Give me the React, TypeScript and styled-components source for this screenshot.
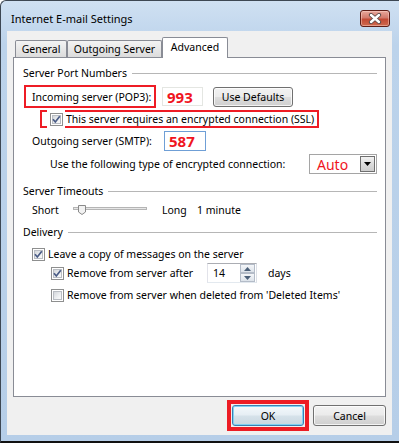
import React from "react";
import styled, { createGlobalStyle } from "styled-components";

const GlobalStyle = createGlobalStyle`
  html, body { margin: 0; padding: 0; background: #fff; }
  body {
    font-family: "Noto Sans", "Open Sans", sans-serif;
    font-size: 10.5px;
    color: #000;
  }
  * { box-sizing: border-box; }
`;

const RED = "#ee1c25";

const CheckMark = () => (
  <svg width="11" height="11" viewBox="0 0 11 11">
    <path d="M2 5.3 L4.3 8 L8.8 2.2" fill="none" stroke="#4a5c86" strokeWidth="1.7" />
  </svg>
);

const CheckBox: React.FC<{ checked?: boolean }> = ({ checked }) => (
  <Box>{checked && <CheckMark />}</Box>
);

const App: React.FC = () => {
  return (
    <>
      <GlobalStyle />
      <Window>
        <TitleBar>
          <Title>Internet E-mail Settings</Title>
          <CloseButton>
            <svg width="14" height="11" viewBox="0 0 14 11">
              <path d="M3 2 L11 9 M11 2 L3 9" stroke="#5b4a48" strokeWidth="4.2" strokeLinecap="round" />
              <path d="M3 2 L11 9 M11 2 L3 9" stroke="#fff" strokeWidth="2.4" strokeLinecap="round" />
            </svg>
          </CloseButton>
        </TitleBar>
        <Client>
          <TabStrip>
            <Tab $w={52}>General</Tab>
            <Tab $w={95}>Outgoing Server</Tab>
            <Tab $w={66} $active>Advanced</Tab>
          </TabStrip>
          <Panel>
            <GroupHeader $mt={7}>Server Port Numbers</GroupHeader>

            <Row $mt={4} $h={23} $indent={1}>
              <MarkBox>Incoming server (POP3):</MarkBox>
              <NumberField $w={41} $h={19} $ml={6}>993</NumberField>
              <Button $w={80} $h={20} $ml={10}>Use Defaults</Button>
            </Row>

            <Row $mt={2} $h={18} $indent={17}>
              <SslMark>
                <CheckCell>
                  <CheckBox checked />
                </CheckCell>
                <Label $ml={1}>This server requires an encrypted connection (SSL)</Label>
              </SslMark>
            </Row>

            <Row $mt={3} $h={20} $indent={9}>
              <Label $w={132}>Outgoing server (SMTP):</Label>
              <NumberField $w={42} $h={20} $focused>587</NumberField>
            </Row>

            <Row $mt={3} $h={20} $indent={27}>
              <Label>Use the following type of encrypted connection:</Label>
              <Select>
                <SelectValue>Auto</SelectValue>
                <SelectArrow>
                  <svg width="7" height="4" viewBox="0 0 7 4">
                    <path d="M0 0 H7 L3.5 4 Z" fill="#000" />
                  </svg>
                </SelectArrow>
              </Select>
            </Row>

            <GroupHeader $mt={9}>Server Timeouts</GroupHeader>

            <Row $mt={3} $h={16} $indent={9}>
              <Label $w={41}>Short</Label>
              <svg width="74" height="12" viewBox="0 0 74 12">
                <rect x="0.5" y="3.5" width="73" height="2" fill="#e6e6e6" stroke="#b5b5b5" />
                <path d="M5.5 1.5 H12.5 V8 L9 10.5 L5.5 8 Z" fill="#f2f2f2" stroke="#8a8a8a" />
              </svg>
              <Label $w={35} $ml={15}>Long</Label>
              <Label>1 minute</Label>
            </Row>

            <GroupHeader $mt={6}>Delivery</GroupHeader>

            <Row $mt={6} $h={16} $indent={9}>
              <CheckBox checked />
              <Label $ml={3}>Leave a copy of messages on the server</Label>
            </Row>

            <Row $mt={1} $h={20} $indent={28}>
              <CheckBox checked />
              <Label $w={140} $ml={3}>Remove from server after</Label>
              <Spin>
                <SpinValue>14</SpinValue>
                <SpinButtons>
                  <SpinHalf>
                    <svg width="7" height="4" viewBox="0 0 7 4">
                      <path d="M0 4 H7 L3.5 0 Z" fill="#4c6079" />
                    </svg>
                  </SpinHalf>
                  <SpinHalf>
                    <svg width="7" height="4" viewBox="0 0 7 4">
                      <path d="M0 0 H7 L3.5 4 Z" fill="#4c6079" />
                    </svg>
                  </SpinHalf>
                </SpinButtons>
              </Spin>
              <Label $ml={11}>days</Label>
            </Row>

            <Row $mt={4} $h={16} $indent={28}>
              <CheckBox />
              <Label $ml={3}>Remove from server when deleted from 'Deleted Items'</Label>
            </Row>
          </Panel>
          <Footer>
            <DefaultMark>
              <Button $w={72} $h={21} $default>OK</Button>
            </DefaultMark>
            <Button $w={73} $h={21} $ml={4} $mt={5}>Cancel</Button>
          </Footer>
        </Client>
      </Window>
    </>
  );
};

export default App;

const Window = styled.div`
  width: 399px;
  height: 443px;
  display: flex;
  flex-direction: column;
  padding: 0 7px 6px 6px;
  background: linear-gradient(180deg, #cfe0f2 0%, #bcd3eb 10%, #b6cee8 100%);
  border-top: 1px solid #3d4753;
  border-left: 1px solid #3d4753;
  border-bottom: 2px solid #111;
  border-top-left-radius: 6px;
  overflow: hidden;
`;

const TitleBar = styled.div`
  height: 30px;
  flex: none;
  display: flex;
  align-items: flex-start;
  padding-left: 4px;
`;

const Title = styled.div`
  margin-top: 10px;
  line-height: 16px;
  font-size: 11px;
`;

const CloseButton = styled.div`
  margin: 9px 2px 0 auto;
  width: 30px;
  height: 17px;
  border: 1px solid #5e1e17;
  border-radius: 3px;
  background: linear-gradient(180deg, #e8a89c 0%, #d27a6c 45%, #c24a35 55%, #cf6a4e 100%);
  box-shadow: inset 0 0 0 1px rgba(255, 220, 210, 0.45);
  display: flex;
  align-items: center;
  justify-content: center;
`;

const Client = styled.div`
  flex: 1;
  display: flex;
  flex-direction: column;
  background: #f0f0f0;
  padding: 6px 6px 0 6px;
`;

const TabStrip = styled.div`
  height: 21px;
  flex: none;
  display: flex;
  align-items: flex-start;
  padding-left: 2px;
  margin-bottom: -1px;
  position: relative;
  z-index: 1;
`;

const Tab = styled.div<{ $w: number; $active?: boolean }>`
  width: ${({ $w }) => $w}px;
  height: ${({ $active }) => ($active ? 21 : 17)}px;
  margin-top: ${({ $active }) => ($active ? 0 : 3)}px;
  padding-bottom: ${({ $active }) => ($active ? 2 : 0)}px;
  display: flex;
  align-items: center;
  justify-content: center;
  border: 1px solid #898c95;
  border-bottom: none;
  border-radius: 2px 2px 0 0;
  background: ${({ $active }) =>
    $active ? "#fff" : "linear-gradient(180deg, #f3f3f3 0%, #e8e8e8 50%, #dcdcdc 100%)"};
  white-space: nowrap;
`;

const Panel = styled.div`
  height: 340px;
  flex: none;
  background: #fff;
  border: 1px solid #898c95;
  padding: 0 8px 0 9px;
  display: flex;
  flex-direction: column;
`;

const GroupHeader = styled.div<{ $mt: number }>`
  display: flex;
  align-items: center;
  height: 16px;
  margin-top: ${({ $mt }) => $mt}px;
  white-space: nowrap;
  &::after {
    content: "";
    flex: 1;
    height: 1px;
    margin: 1px 0 0 5px;
    background: #b6b6b6;
  }
`;

const Row = styled.div<{ $mt: number; $h: number; $indent?: number }>`
  display: flex;
  align-items: center;
  height: ${({ $h }) => $h}px;
  margin-top: ${({ $mt }) => $mt}px;
  padding-left: ${({ $indent }) => $indent ?? 0}px;
  flex: none;
`;

const Label = styled.span<{ $w?: number; $ml?: number }>`
  flex: none;
  width: ${({ $w }) => ($w ? `${$w}px` : "auto")};
  margin-left: ${({ $ml }) => $ml ?? 0}px;
  white-space: nowrap;
`;

const MarkBox = styled.div`
  width: 132px;
  height: 23px;
  border: 2px solid ${RED};
  padding-left: 6px;
  display: flex;
  align-items: center;
  white-space: nowrap;
`;

const SslMark = styled.div`
  height: 18px;
  display: flex;
  align-items: center;
  border: 2px solid ${RED};
  padding: 0 3px 0 5px;
`;

const CheckCell = styled.span`
  width: 18px;
  height: 18px;
  margin: -2px 0;
  padding-left: 3px;
  background: #fff;
  display: flex;
  align-items: center;
  flex: none;
`;

const Box = styled.span`
  position: relative;
  flex: none;
  width: 13px;
  height: 13px;
  border: 1px solid #8e8f8f;
  background: #fff;
  &::before {
    content: "";
    position: absolute;
    inset: 1px;
    border: 1px solid #b9bdc3;
    background: linear-gradient(135deg, #d3d6da 0%, #eef0f2 60%, #fafafa 100%);
  }
  svg {
    position: absolute;
    left: 0;
    top: 0;
  }
`;

const NumberField = styled.div<{ $w: number; $h: number; $ml?: number; $focused?: boolean }>`
  width: ${({ $w }) => $w}px;
  height: ${({ $h }) => $h}px;
  margin-left: ${({ $ml }) => $ml ?? 0}px;
  border: 1px solid ${({ $focused }) => ($focused ? "#6f9fd6" : "#e4e6e2")};
  background: #fff;
  padding-left: 4px;
  display: flex;
  align-items: center;
  color: #f0141e;
  font-weight: 700;
  font-size: 15px;
  flex: none;
`;

const Button = styled.button<{ $w: number; $h: number; $ml?: number; $mt?: number; $default?: boolean }>`
  width: ${({ $w }) => $w}px;
  height: ${({ $h }) => $h}px;
  margin-left: ${({ $ml }) => $ml ?? 0}px;
  margin-top: ${({ $mt }) => $mt ?? 0}px;
  padding: 0;
  flex: none;
  font: inherit;
  color: #000;
  border: 1px solid ${({ $default }) => ($default ? "#3c7fb1" : "#707070")};
  border-radius: 3px;
  background: ${({ $default }) =>
    $default
      ? "linear-gradient(180deg, #f4f9fc 0%, #e6eef4 48%, #d6e2ea 52%, #c9d7e1 100%)"
      : "linear-gradient(180deg, #f2f2f2 0%, #ebebeb 48%, #dddddd 52%, #cfcfcf 100%)"};
  box-shadow: inset 0 0 0 1px ${({ $default }) => ($default ? "#7fd2f3" : "rgba(255,255,255,0.75)")};
`;

const Select = styled.div`
  width: 68px;
  height: 20px;
  margin-left: auto;
  border: 1px solid #a5a5a5;
  background: #fff;
  display: flex;
  align-items: center;
  padding: 0 1px 0 7px;
  flex: none;
`;

const SelectValue = styled.span`
  flex: 1;
  color: #f0141e;
  font-size: 14px;
`;

const SelectArrow = styled.span`
  width: 15px;
  height: 16px;
  border: 1px solid #6f6f6f;
  background: linear-gradient(180deg, #f2f2f2 0%, #dcdcdc 50%, #cdcdcd 100%);
  display: flex;
  align-items: center;
  justify-content: center;
`;

const Spin = styled.div`
  width: 50px;
  height: 20px;
  border: 1px solid #abadb3;
  border-color: #abadb3 #dbdfe6 #e3e9ef #e2e3ea;
  background: #fff;
  display: flex;
  align-items: stretch;
  flex: none;
`;

const SpinValue = styled.span`
  flex: 1;
  padding-left: 5px;
  display: flex;
  align-items: center;
`;

const SpinButtons = styled.span`
  width: 16px;
  display: flex;
  flex-direction: column;
  padding: 0 1px 0 0;
`;

const SpinHalf = styled.span`
  flex: 1;
  border: 1px solid #b4bcc8;
  background: linear-gradient(180deg, #f4f6f9 0%, #dde3ea 100%);
  display: flex;
  align-items: center;
  justify-content: center;
`;

const Footer = styled.div`
  display: flex;
  justify-content: flex-end;
  align-items: flex-start;
  padding-top: 3px;
`;

const DefaultMark = styled.div`
  border: 4px solid #ed1c24;
  padding: 1px;
  display: flex;
`;
